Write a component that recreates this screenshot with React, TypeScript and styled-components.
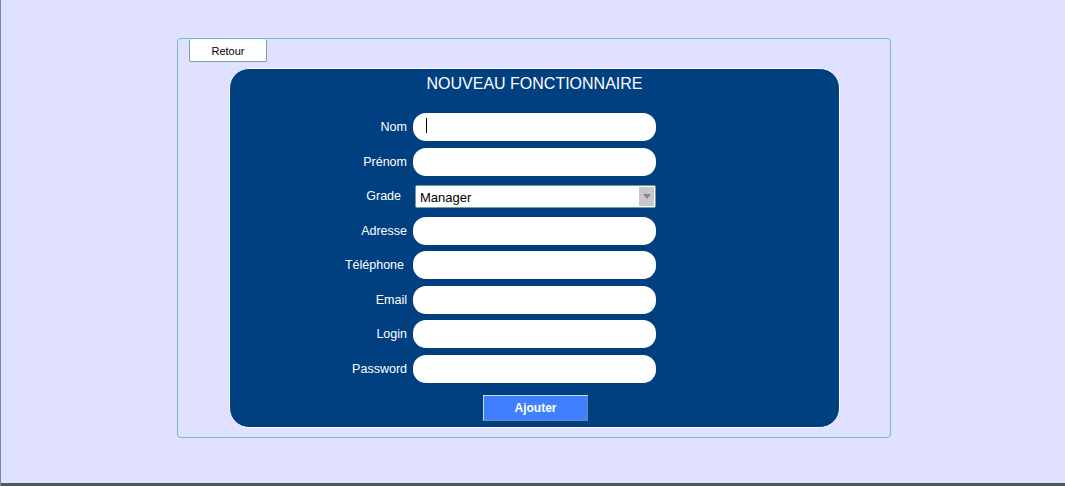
import styled, { createGlobalStyle } from 'styled-components';

const GlobalStyle = createGlobalStyle`
  html, body {
    margin: 0;
    padding: 0;
    height: 100%;
  }
  body {
    font-family: "Liberation Sans", Arial, sans-serif;
    background: #e0e0ff;
  }
  #root {
    height: 100%;
  }
`

const Screen = styled.div`
  height: 100%;
  display: flex;
  flex-direction: column;
  border-left: 1px solid #6f8f92;
  box-sizing: border-box;
`

const Page = styled.div`
  flex: 1;
  background: #e0e0ff;
`

const BottomBar = styled.div`
  height: 3px;
  background: #505a5c;
`

const Frame = styled.div`
  margin: 38px 0 0 176px;
  width: 714px;
  box-sizing: border-box;
  border: 1px solid #72bcc4;
  border-radius: 4px;
  padding: 0 50px 9px 51px;
  display: flex;
  flex-direction: column;
  align-items: stretch;
`

const BackButton = styled.button`
  align-self: flex-start;
  margin-left: -40px;
  width: 78px;
  height: 23px;
  background: #fff;
  border: 1px solid #7aa0a0;
  border-top-color: #f4f8f8;
  border-radius: 2px;
  font-family: "Liberation Sans", Arial, sans-serif;
  font-size: 11px;
  color: #000;
  padding: 0;
  cursor: pointer;
`

const Panel = styled.form`
  margin-top: 6px;
  background: #004080;
  border: 1px solid #ffffff;
  border-radius: 20px;
  display: flex;
  flex-direction: column;
  align-items: stretch;
  padding: 0 0 6px;
`

const Title = styled.h1`
  margin: 0;
  height: 41px;
  padding-top: 4px;
  box-sizing: border-box;
  text-align: center;
  font-size: 16px;
  font-weight: normal;
  color: #fff;
  line-height: 22px;
`

const FormGrid = styled.div`
  display: grid;
  grid-template-columns: 177px 243px;
  column-gap: 6px;
  grid-auto-rows: 34.5px;
  align-items: center;
`

const Label = styled.label<{ $pad?: number }>`
  text-align: right;
  font-size: 12.5px;
  color: #ffffff;
  padding-right: ${p => p.$pad ?? 0}px;
`

const TextInput = styled.input<{ $caret?: boolean }>`
  height: 28px;
  width: 243px;
  box-sizing: border-box;
  border: none;
  border-radius: 13px;
  background-color: #fff;
  outline: none;
  padding: 0 12px;
  font-family: "Liberation Sans", Arial, sans-serif;
  font-size: 13px;
  ${p => p.$caret && `
    background-image: linear-gradient(#000, #000);
    background-size: 1px 15px;
    background-position: 13px 5px;
    background-repeat: no-repeat;
  `}
`

const SelectBox = styled.div`
  margin-left: 2px;
  height: 23px;
  width: 241px;
  box-sizing: border-box;
  border: 1px solid #6f9c9c;
  border-radius: 2px;
  background: #fff;
  display: flex;
  align-items: center;
  padding: 1px;
`

const SelectValue = styled.span`
  flex: 1;
  padding-left: 3px;
  padding-top: 2px;
  font-size: 13px;
  color: #000;
`

const SelectArrow = styled.span`
  width: 15px;
  height: 19px;
  background: #c8c8c8;
  display: flex;
  align-items: center;
  justify-content: center;
`

const Actions = styled.div`
  display: flex;
  justify-content: center;
  margin-top: 9px;
  padding-left: 2px;
`

const SubmitButton = styled.button`
  width: 105px;
  height: 26px;
  background: #4080ff;
  border: 1px solid #c8d8f0;
  border-bottom-color: #7088a8;
  border-right-color: #7088a8;
  color: #fff;
  font-family: "Liberation Sans", Arial, sans-serif;
  font-weight: bold;
  font-size: 12px;
  padding: 0;
  cursor: pointer;
`

const fields = ['Adresse', 'Téléphone', 'Email', 'Login', 'Password']

export default function App() {
  return (
    <Screen>
      <GlobalStyle />
      <Page>
        <Frame>
          <BackButton type="button">Retour</BackButton>
          <Panel onSubmit={e => e.preventDefault()}>
            <Title>NOUVEAU FONCTIONNAIRE</Title>
            <FormGrid>
              <Label>Nom</Label>
              <TextInput $caret />
              <Label>Prénom</Label>
              <TextInput />
              <Label $pad={6}>Grade</Label>
              <SelectBox>
                <SelectValue>Manager</SelectValue>
                <SelectArrow>
                  <svg width="8" height="5" viewBox="0 0 8 5">
                    <path d="M0 0h8L4 5z" fill="#7a8a90" />
                  </svg>
                </SelectArrow>
              </SelectBox>
              {fields.map(f => [
                <Label key={f + '-l'} $pad={f === 'Téléphone' ? 3 : 0}>{f}</Label>,
                <TextInput key={f} type={f === 'Password' ? 'password' : 'text'} />,
              ])}
            </FormGrid>
            <Actions>
              <SubmitButton type="submit">Ajouter</SubmitButton>
            </Actions>
          </Panel>
        </Frame>
      </Page>
      <BottomBar />
    </Screen>
  );
}
